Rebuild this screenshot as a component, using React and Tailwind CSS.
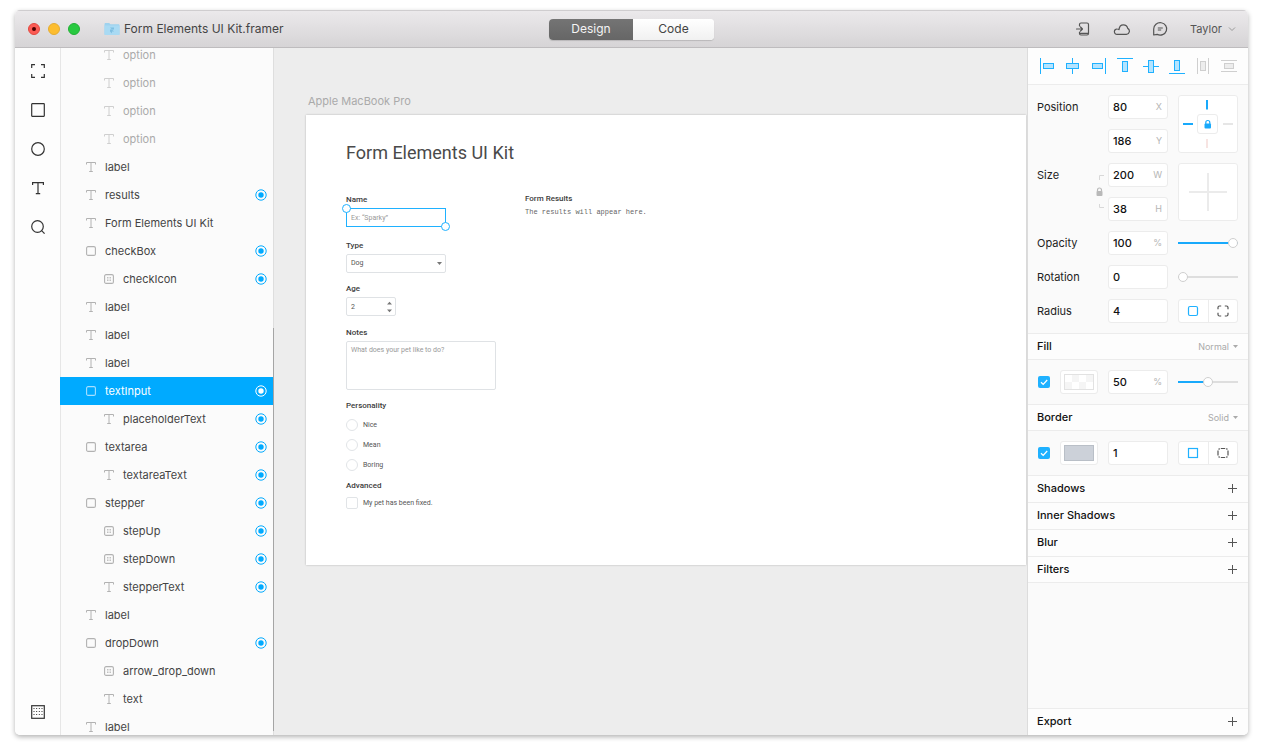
import React from "react";

const layers = [
  { name: "option", icon: "text", depth: 2, dim: true },
  { name: "option", icon: "text", depth: 2, dim: true },
  { name: "option", icon: "text", depth: 2, dim: true },
  { name: "option", icon: "text", depth: 2, dim: true },
  { name: "label", icon: "text", depth: 1 },
  { name: "results", icon: "text", depth: 1, target: true },
  { name: "Form Elements UI Kit", icon: "text", depth: 1 },
  { name: "checkBox", icon: "frame", depth: 1, target: true },
  { name: "checkIcon", icon: "vector", depth: 2, target: true },
  { name: "label", icon: "text", depth: 1 },
  { name: "label", icon: "text", depth: 1 },
  { name: "label", icon: "text", depth: 1 },
  { name: "textInput", icon: "frame", depth: 1, target: true, selected: true },
  { name: "placeholderText", icon: "text", depth: 2, target: true },
  { name: "textarea", icon: "frame", depth: 1, target: true },
  { name: "textareaText", icon: "text", depth: 2, target: true },
  { name: "stepper", icon: "frame", depth: 1, target: true },
  { name: "stepUp", icon: "vector", depth: 2, target: true },
  { name: "stepDown", icon: "vector", depth: 2, target: true },
  { name: "stepperText", icon: "text", depth: 2, target: true },
  { name: "label", icon: "text", depth: 1 },
  { name: "dropDown", icon: "frame", depth: 1, target: true },
  { name: "arrow_drop_down", icon: "vector", depth: 2 },
  { name: "text", icon: "text", depth: 2 },
  { name: "label", icon: "text", depth: 1 },
];

/* ---------- Title bar ---------- */

function TitleBar() {
  return (
    <header className="grid h-[38px] shrink-0 grid-cols-[1fr_auto_1fr] items-center border-t border-b border-t-[#cfcdcf] border-b-[#bebcbe] bg-linear-to-b from-[#ebe9eb] to-[#d6d4d6] text-[#444]">
      <div className="flex items-center pl-[13px]">
        <div className="flex gap-2">
          <button aria-label="Close" className="grid size-3 place-items-center rounded-full border border-[#e2483f] bg-[#fc5b55]">
            <span className="size-1 rounded-full bg-[#4d0000]" />
          </button>
          <button aria-label="Minimize" className="size-3 rounded-full border border-[#e5ac30] bg-[#fdbd2f]" />
          <button aria-label="Zoom" className="size-3 rounded-full border border-[#22b035] bg-[#28c940]" />
        </div>
        <svg className="ml-6 shrink-0" width="16" height="14" viewBox="0 0 16 14" aria-hidden="true">
          <path d="M.5 2.2C.5 1.5 1 1 1.600 1h3.600l1.300 1.300h7.900c.6 0 1.100.5 1.100 1.100v8.500c0 .6-.5 1.100-1.100 1.100H1.600C1 13 .5 12.500.5 11.900z" fill="#9ed2ee" />
          <path d="M.5 3.600h15v8.300c0 .6-.5 1.100-1.100 1.100H1.600C1 13 .5 12.500.5 11.900z" fill="#a9daf3" />
          <path d="M6 5.500h4v2H8zM6 7.500h2l2 2H8v2l-2-2z" fill="#7fbfe2" />
        </svg>
        <h1 className="ml-1 text-[12px] whitespace-nowrap">Form Elements UI Kit.framer</h1>
      </div>
      <div className="flex h-[21px] overflow-hidden rounded-sm bg-white text-[12px] shadow-[0_1px_1px_rgba(0,0,0,0.15)]">
        <button className="w-[84px] bg-linear-to-b from-[#747474] to-[#666] text-[#f4f4f4]">Design</button>
        <button className="w-[81px] bg-linear-to-b from-white to-[#f1f1f1]">Code</button>
      </div>
      <div className="flex items-center justify-end gap-[22px] pr-3 text-[#555]">
        <button aria-label="Preview on device">
          <svg width="16" height="16" viewBox="0 0 16 16" fill="none" stroke="currentColor" strokeWidth="1.200" strokeLinecap="round" strokeLinejoin="round">
            <path d="M4.500 5V3.500c0-1 .5-1.500 1.500-1.500h6c1 0 1.500.5 1.500 1.500v9c0 1-.5 1.500-1.500 1.500H6c-1 0-1.500-.5-1.500-1.500V11M1.500 8h6M5.500 6l2 2-2 2M5 12.300h8.300" />
          </svg>
        </button>
        <button aria-label="Cloud">
          <svg width="17" height="16" viewBox="0 0 17 16" fill="none" stroke="currentColor" strokeWidth="1.200" strokeLinejoin="round">
            <path d="M4 13.400a2.700 2.700 0 0 1 .2-5.400c.7 0 1.300.2 1.800.6.300-3 2-4.800 4.300-4.800 2.400 0 4 1.500 4.400 3.600a3.200 3.200 0 0 1-1.300 6z" />
          </svg>
        </button>
        <button aria-label="Messages">
          <svg width="16" height="16" viewBox="0 0 16 16" fill="none" stroke="currentColor" strokeWidth="1.200" strokeLinejoin="round">
            <path d="M1.700 14V8a6.500 6.200 0 1 1 3.500 5.400zM5.800 7h5M5.800 9h3.400" />
          </svg>
        </button>
        <button className="flex items-center gap-[6px] text-[11px]">
          Taylor
          <svg width="8" height="6" viewBox="0 0 8 6" fill="none" stroke="#999" aria-hidden="true">
            <path d="M1 1.500l3 3 3-3" />
          </svg>
        </button>
      </div>
    </header>
  );
}

/* ---------- Tool rail ---------- */

function Tool({ label, children }) {
  return (
    <button aria-label={label} className="block size-[14px]">
      <svg width="14" height="14" viewBox="0 0 14 14" fill="none" stroke="#333" strokeWidth="1.200">
        {children}
      </svg>
    </button>
  );
}

function ToolRail() {
  return (
    <nav aria-label="Tools" className="flex w-[45px] shrink-0 flex-col items-center justify-between bg-[#fdfdfd] py-4">
      <div className="flex flex-col gap-[25px]">
        <Tool label="Frame">
          <path d="M.7 4V.7H4M10 .7h3.300V4M13.300 10v3.300H10M4 13.300H.7V10" />
        </Tool>
        <Tool label="Rectangle">
          <rect x=".7" y=".7" width="12.600" height="12.600" rx=".5" />
        </Tool>
        <Tool label="Oval">
          <circle cx="7" cy="7" r="6.300" />
        </Tool>
        <Tool label="Text">
          <path d="M1.600 4V1.600h10.800V4M7 1.600v11M4.800 12.600h4.400" />
        </Tool>
        <Tool label="Search">
          <circle cx="6.500" cy="6.500" r="5.800" />
          <path d="M10.600 10.600l3 3" />
        </Tool>
      </div>
      <Tool label="Grid">
        <rect x=".7" y=".7" width="12.600" height="12.600" />
        <path d="M2.500 3.500h9.500M2.500 6.500h9.500M2.500 9.500h9.500" strokeWidth="1" strokeDasharray="1 1.670" />
      </Tool>
    </nav>
  );
}

/* ---------- Layer list ---------- */

function LayerIcon({ kind, selected }) {
  return (
    <svg className="block" width="10" height="10" viewBox="0 0 10 10" fill="none" stroke={selected ? "#a6dfff" : "#b2b2b2"} aria-hidden="true">
      {kind === "text" && <path d="M.5 2.500v-2h9v2M5 .5v9M3.200 9.500h3.600" />}
      {kind === "frame" && <rect x=".6" y=".6" width="8.800" height="8.800" rx="1.500" strokeWidth="1.100" />}
      {kind === "vector" && (
        <>
          <rect x=".6" y=".6" width="8.800" height="8.800" rx="1.500" strokeWidth="1.100" />
          <path d="M3 3.500h1.500M5.500 3.500H7M3 6.500h1.500M5.500 6.500H7M3 5h1.500M5.500 5H7" strokeWidth=".8" />
        </>
      )}
    </svg>
  );
}

function Layers() {
  return (
    <aside aria-label="Layers" className="relative w-[214px] shrink-0 overflow-hidden bg-[#fbfbfb]">
      <ul className="-mt-[7px] border-r border-[#dedede]">
        {layers.map((l, i) => (
          <li key={i}>
            <button
              className={
                "flex h-7 w-full items-center border-l pr-[6px] text-[11px] " +
                (l.depth === 1 ? "gap-[9px] pl-[25px] " : "gap-[9px] pl-[43px] ") +
                (l.selected ? "border-[#00aaff] bg-[#00aaff] text-white" : "border-[#e6e6e6] " + (l.dim ? "text-[#aaa]" : "text-[#444]"))
              }
            >
              <span className={l.dim ? "opacity-60" : ""}>
                <LayerIcon kind={l.icon} selected={l.selected} />
              </span>
              <span className="flex-1 text-left whitespace-nowrap">{l.name}</span>
              {l.target && (
                <svg width="12" height="12" viewBox="0 0 12 12" fill="none" aria-hidden="true" className={l.selected ? "text-white" : "text-[#00aaff]"}>
                  <circle cx="6" cy="6" r="5.200" stroke="currentColor" />
                  <circle cx="6" cy="6" r="2.700" fill="currentColor" />
                </svg>
              )}
            </button>
          </li>
        ))}
      </ul>
      <span className="absolute top-[280px] right-0 bottom-1 w-px bg-[#a5a5a5]" />
    </aside>
  );
}

/* ---------- Canvas ---------- */

function FormLabel({ htmlFor, children }) {
  return (
    <label htmlFor={htmlFor} className="mb-[3px] block text-[8px] leading-[10px] font-medium text-[#3c3c3c]">
      {children}
    </label>
  );
}

function Handle({ className }) {
  return <span className={"absolute size-[9px] rounded-full border border-[#1fb1ff] bg-white " + className} />;
}

function Choice({ type, name, label }) {
  return (
    <label className="flex h-3 items-center gap-[5px] text-[7px] text-[#555]">
      <input type={type} name={name} className={"size-3 appearance-none border border-[#e1e4e7] bg-white " + (type === "radio" ? "rounded-full" : "rounded-xs")} />
      {label}
    </label>
  );
}

function Artboard() {
  const box = "block rounded-xs border border-[#dfe2e5] bg-white px-1 text-[7px] text-[#555]";
  return (
    <section className="h-[450px] w-[720px] bg-white px-10 pt-[26px] font-['Roboto','Liberation_Sans',sans-serif] shadow-[0_0_2px_rgba(0,0,0,0.25)]">
      <h2 className="text-[18px] leading-6 text-[#4a4a4a]">Form Elements UI Kit</h2>
      <div className="mt-[30px] flex gap-[29px]">
        <form className="w-[150px]">
          <FormLabel htmlFor="pet-name">Name</FormLabel>
          <div className="relative h-[19px] w-[100px]">
            <input id="pet-name" placeholder={"Ex: “Sparky”"} className="block h-full w-full border border-[#1fb1ff] bg-white px-1 text-[7px] placeholder:text-[#999]" />
            <Handle className="-top-1 -left-1" />
            <Handle className="-right-1 -bottom-1" />
          </div>
          <div className="mt-[14px]">
            <FormLabel htmlFor="pet-type">Type</FormLabel>
            <div className="relative w-[100px]">
              <select id="pet-type" className={"h-[19px] w-full appearance-none " + box}>
                <option>Dog</option>
              </select>
              <svg className="pointer-events-none absolute top-2 right-1" width="5" height="3" viewBox="0 0 5 3" fill="#777" aria-hidden="true">
                <path d="M0 0h5L2.500 3z" />
              </svg>
            </div>
          </div>
          <div className="mt-[11px]">
            <FormLabel htmlFor="pet-age">Age</FormLabel>
            <div className="relative w-[50px]">
              <input id="pet-age" type="number" defaultValue="2" className={"h-[19px] w-full [appearance:textfield] " + box} />
              <svg className="pointer-events-none absolute top-1 right-1" width="5" height="12" viewBox="0 0 5 12" fill="#777" aria-hidden="true">
                <path d="M0 3.500h5L2.500.8zM0 8.500h5l-2.500 2.700z" />
              </svg>
            </div>
          </div>
          <div className="mt-[12px]">
            <FormLabel htmlFor="pet-notes">Notes</FormLabel>
            <textarea id="pet-notes" placeholder="What does your pet like to do?" className={"h-[49px] w-full resize-none py-1 leading-[8px] placeholder:text-[#999] " + box} />
          </div>
          <fieldset className="mt-[11px]">
            <legend className="mb-[8px] text-[8px] leading-[10px] font-medium text-[#3c3c3c]">Personality</legend>
            <div className="flex flex-col gap-[8px]">
              <Choice type="radio" name="personality" label="Nice" />
              <Choice type="radio" name="personality" label="Mean" />
              <Choice type="radio" name="personality" label="Boring" />
            </div>
          </fieldset>
          <fieldset className="mt-[10px]">
            <legend className="mb-[6px] text-[8px] leading-[10px] font-medium text-[#3c3c3c]">Advanced</legend>
            <Choice type="checkbox" name="fixed" label="My pet has been fixed." />
          </fieldset>
        </form>
        <div>
          <h3 className="text-[8px] leading-[8px] font-medium text-[#3c3c3c]">Form Results</h3>
          <p className="mt-[5px] font-['Liberation_Mono',monospace] text-[7px] leading-[8px] text-[#666]">The results will appear here.</p>
        </div>
      </div>
    </section>
  );
}

/* ---------- Inspector ---------- */

const frame = "rounded-[3px] border border-[#ececec] bg-white";

function Field({ id, label, value, unit }) {
  return (
    <div className={"flex h-6 w-[60px] items-center pr-[5px] pl-1 " + frame}>
      <input id={id} aria-label={label} defaultValue={value} className="w-full min-w-0 bg-transparent text-[11px] font-medium text-[#111] outline-none" />
      {unit && <span className="text-[9px] text-[#b5b5b5]">{unit}</span>}
    </div>
  );
}

function Slider({ label, value }) {
  return (
    <input
      type="range"
      aria-label={label}
      defaultValue={value}
      style={{ backgroundImage: `linear-gradient(to right, #18a9fb ${value}%, #dedede ${value}%)` }}
      className="block h-[10px] w-[60px] appearance-none bg-transparent bg-[length:100%_2px] bg-center bg-no-repeat [&::-webkit-slider-thumb]:size-[10px] [&::-webkit-slider-thumb]:appearance-none [&::-webkit-slider-thumb]:rounded-full [&::-webkit-slider-thumb]:border [&::-webkit-slider-thumb]:border-[#cfcfcf] [&::-webkit-slider-thumb]:bg-white"
    />
  );
}

function Toggle({ first, second, labels }) {
  return (
    <div className={"flex h-6 w-[60px] divide-x divide-[#ececec] " + frame}>
      <button aria-label={labels[0]} className="grid flex-1 place-items-center">
        <svg width="12" height="12" viewBox="0 0 12 12" fill="none" stroke="#1fb1ff" strokeWidth="1.200">{first}</svg>
      </button>
      <button aria-label={labels[1]} className="grid flex-1 place-items-center">
        <svg width="12" height="12" viewBox="0 0 12 12" fill="none" stroke="#555" strokeWidth="1.200">{second}</svg>
      </button>
    </div>
  );
}

function AlignButton({ label, muted, line, rect }) {
  return (
    <button aria-label={label} className="size-4">
      <svg width="16" height="16" viewBox="0 0 16 16" stroke={muted ? "#cfcfcf" : "#1fb1ff"} fill={muted ? "#ededed" : "#b4e4ff"}>
        <path d={line} />
        <rect x={rect[0]} y={rect[1]} width={rect[2]} height={rect[3]} />
      </svg>
    </button>
  );
}

function LayerStyle({ title, mode, swatch, children }) {
  return (
    <section>
      <div className="flex h-[26px] items-center justify-between border-b border-[#ececec] bg-[#fdfdfd] pr-[10px] pl-[9px]">
        <h3 className="font-medium text-[#111]">{title}</h3>
        <button className="flex items-center gap-1 text-[9px] text-[#aaa]">
          {mode}
          <svg width="5" height="3" viewBox="0 0 5 3" fill="#aaa" aria-hidden="true">
            <path d="M0 0h5L2.500 3z" />
          </svg>
        </button>
      </div>
      <div className="grid grid-cols-[1fr_60px_70px] items-center border-b border-[#ececec] py-[10px] pr-[10px] pl-[9px]">
        <div className="flex items-center gap-[10px] pl-px">
          <label className="relative block size-3">
            <input type="checkbox" aria-label={title} defaultChecked className="block size-3 appearance-none rounded-xs bg-[#1fb1ff]" />
            <svg className="pointer-events-none absolute inset-0" width="12" height="12" viewBox="0 0 12 12" fill="none" stroke="#fff" strokeWidth="1.300" aria-hidden="true">
              <path d="M3 6.200l2.200 2.200L9.200 4" />
            </svg>
          </label>
          <button aria-label={title + " color"} className={"h-6 w-[38px] p-[3px] " + frame}>
            {swatch}
          </button>
        </div>
        {children}
      </div>
    </section>
  );
}

function AddRow({ title, className }) {
  return (
    <div className={"flex items-center justify-between border-[#ececec] bg-[#fdfdfd] pr-[10px] pb-px pl-[9px] " + className}>
      <h3 className="font-medium text-[#111]">{title}</h3>
      <button aria-label={"Add " + title}>
        <svg className="block" width="11" height="11" viewBox="0 0 11 11" stroke="#555" aria-hidden="true">
          <path d="M5.500 1v9M1 5.500h9" />
        </svg>
      </button>
    </div>
  );
}

function Inspector() {
  return (
    <aside aria-label="Properties" className="flex w-[221px] shrink-0 flex-col border-l border-[#dcdcdc] bg-[#fafafa] text-[11px]">
      <div className="flex h-[37px] items-center justify-between border-b border-[#ececec] bg-[#fdfdfd] px-[11px]">
        <AlignButton label="Align left" line="M1.500 0v16" rect={[4.5, 5.500, 10, 5]} />
        <AlignButton label="Align center" line="M7.500 0v16" rect={[1.500, 5.500, 12, 5]} />
        <AlignButton label="Align right" line="M14.500 0v16" rect={[1.500, 5.500, 10, 5]} />
        <AlignButton label="Align top" line="M0 .5h16" rect={[5.500, 3.500, 5, 10]} />
        <AlignButton label="Align middle" line="M0 8.500h16" rect={[5.500, 2.500, 5, 12]} />
        <AlignButton label="Align bottom" line="M0 15.500h16" rect={[5.500, 2.500, 5, 10]} />
        <AlignButton label="Distribute horizontally" muted line="M2.500 0v16M13.500 0v16" rect={[5.500, 3.500, 5, 9]} />
        <AlignButton label="Distribute vertically" muted line="M0 2.500h16M0 13.500h16" rect={[3.500, 5.500, 9, 5]} />
      </div>

      <section className="grid grid-cols-[1fr_60px_70px] gap-y-[10px] border-b border-[#ececec] pt-[10px] pr-[10px] pb-[10px] pl-[9px] text-[#222]">
        <label htmlFor="pos-x" className="row-span-2 leading-6">Position</label>
        <Field id="pos-x" value="80" unit="X" />
        <div className="row-span-2 ml-[10px]">
          <svg width="60" height="58" viewBox="0 0 60 58" fill="none" role="img" aria-label="Constraints">
            <rect x=".5" y=".5" width="59" height="57" rx="2.500" fill="#fff" stroke="#ececec" />
            <rect x="19.500" y="19.500" width="20" height="19" rx="2.500" fill="#fff" stroke="#ececec" />
            <path d="M29 5v9.500M5 29h10" stroke="#18a9fb" strokeWidth="2" />
            <path d="M45 29h10" stroke="#e6e6e6" strokeWidth="2" />
            <path d="M29 44v9" stroke="#f7e4e2" strokeWidth="2" />
            <rect x="26.500" y="28.500" width="6.500" height="5" rx="1" fill="#18a9fb" />
            <path d="M27.800 29v-1.500a2 2 0 0 1 4 0V29" stroke="#18a9fb" strokeWidth="1.200" />
          </svg>
        </div>
        <Field label="Y" value="186" unit="Y" />

        <div className="row-span-2 flex justify-between pr-1">
          <label htmlFor="size-w" className="leading-6">Size</label>
          <svg width="9" height="58" viewBox="0 0 9 58" fill="none" role="img" aria-label="Proportions unlocked">
            <path d="M4.500 17v-4.500H9M4.500 41v3.500H9" stroke="#d8d8d8" />
            <rect x="1.500" y="28" width="6" height="5" rx="1" fill="#b9b9b9" />
            <path d="M2.500 28.500v-1.500a2 2 0 0 1 4 0v1.500" stroke="#b9b9b9" strokeWidth="1.200" />
          </svg>
        </div>
        <Field id="size-w" value="200" unit="W" />
        <div className="row-span-2 ml-[10px]">
          <svg width="60" height="58" viewBox="0 0 60 58" fill="none" role="img" aria-label="Auto size">
            <rect x=".5" y=".5" width="59" height="57" rx="2.500" fill="#fff" stroke="#ececec" />
            <path d="M30 10v38M11 29h38" stroke="#ebebeb" strokeWidth="2" />
          </svg>
        </div>
        <Field label="Height" value="38" unit="H" />

        <label htmlFor="opacity" className="leading-6">Opacity</label>
        <Field id="opacity" value="100" unit="%" />
        <div className="ml-[10px] self-center"><Slider label="Opacity" value={100} /></div>

        <label htmlFor="rotation" className="leading-6">Rotation</label>
        <Field id="rotation" value="0" />
        <div className="ml-[10px] self-center"><Slider label="Rotation" value={0} /></div>

        <label htmlFor="radius" className="leading-6">Radius</label>
        <Field id="radius" value="4" />
        <div className="ml-[10px]">
          <Toggle
            labels={["Uniform radius", "Individual radius"]}
            first={<rect x="1.500" y="1.500" width="9" height="9" rx="1.500" />}
            second={<path d="M1 4.200V2.500C1 1.500 1.500 1 2.500 1h1.700M7.800 1h1.700C10.500 1 11 1.500 11 2.500v1.700M11 7.800v1.700c0 1-.5 1.500-1.500 1.500H7.800M4.200 11H2.500C1.500 11 1 10.500 1 9.500V7.800" />}
          />
        </div>
      </section>

      <LayerStyle
        title="Fill"
        mode="Normal"
        swatch={
          <svg className="block" width="30" height="16" viewBox="0 0 30 16" aria-hidden="true">
            <rect x=".5" y=".5" width="29" height="15" fill="#fff" stroke="#e2e2e2" />
            <path d="M8 1h7v7H8zM22 1h7v7h-7zM1 8h7v7H1zM15 8h7v7h-7z" fill="#f5f5f5" />
          </svg>
        }
      >
        <Field label="Fill opacity" value="50" unit="%" />
        <div className="ml-[10px]"><Slider label="Fill opacity" value={50} /></div>
      </LayerStyle>

      <LayerStyle
        title="Border"
        mode="Solid"
        swatch={<span className="block h-4 w-[30px] border border-[#b9bfc7] bg-[#ccd1d9]" />}
      >
        <Field label="Border width" value="1" />
        <div className="ml-[10px]">
          <Toggle
            labels={["Uniform border", "Individual borders"]}
            first={<rect x="1.500" y="1.500" width="9" height="9" />}
            second={<path d="M3.800 1.500h4.400M3.800 10.500h4.400M1 3.500v5M11 3.500v5M2.600 1.500l-1 1M9.400 1.500l1 1M2.600 10.500l-1-1M9.400 10.500l1-1" />}
          />
        </div>
      </LayerStyle>

      <AddRow title="Shadows" className="h-[27px] border-b" />
      <AddRow title="Inner Shadows" className="h-[27px] border-b" />
      <AddRow title="Blur" className="h-[27px] border-b" />
      <AddRow title="Filters" className="h-[26px] border-b" />
      <AddRow title="Export" className="mt-auto h-[27px] border-t" />
    </aside>
  );
}

export default function App() {
  return (
    <div className="flex h-screen bg-white px-[15px] pt-[10px] pb-[19px] font-['Inter','Liberation_Sans',sans-serif]">
      <div className="flex min-w-0 flex-1 flex-col overflow-hidden rounded-[5px] shadow-[0_2px_5px_rgba(0,0,0,0.3)]">
        <TitleBar />
        <div className="flex min-h-0 flex-1">
          <ToolRail />
          <Layers />
          <main className="min-w-0 flex-1 overflow-hidden bg-[#ededed] pt-[46px] pl-8">
            <p className="mb-[6px] pl-[2px] text-[11px] leading-[15px] text-[#aaa]">Apple MacBook Pro</p>
            <Artboard />
          </main>
          <Inspector />
        </div>
      </div>
    </div>
  );
}
